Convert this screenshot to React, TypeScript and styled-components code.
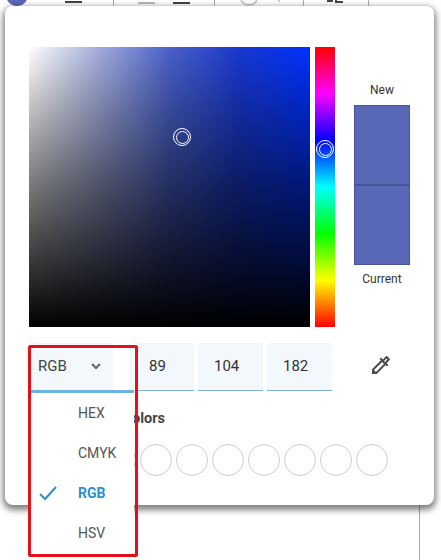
import React from "react";
import styled, { createGlobalStyle } from "styled-components";
import { MdOutlineColorize } from "react-icons/md";

const Global = createGlobalStyle`
  html, body { margin: 0; padding: 0; background: #fff; }
  body { font-family: Roboto, "Liberation Sans", sans-serif; color: #333; }
`;

const Page = styled.div`
  position: relative;
  width: 441px;
  height: 560px;
  overflow: hidden;
  background: #fff;
`;

const Toolbar = styled.div`
  display: flex;
  height: 7px;
  overflow: hidden;
`;

const ToolSection = styled.div<{ $w: number; $pad: number }>`
  box-sizing: border-box;
  width: ${(p) => p.$w}px;
  height: 7px;
  padding-left: ${(p) => p.$pad}px;
  border-right: 1px solid #aaa;
  display: flex;
  gap: 18px;
`;

const Dash = styled.div<{ $c: string; $y: number }>`
  width: 17px;
  height: 2px;
  margin-top: ${(p) => p.$y}px;
  background: ${(p) => p.$c};
`;

const Avatar = styled.div`
  position: absolute;
  left: 6px;
  top: -16px;
  width: 22px;
  height: 22px;
  border-radius: 50%;
  background: #5968b6;
`;

const Sheet = styled.div`
  box-sizing: border-box;
  width: 420px;
  height: 553px;
  border-right: 1px solid #aaa;
`;

const Dialog = styled.div`
  position: absolute;
  left: 5px;
  top: 6px;
  box-sizing: border-box;
  width: 429px;
  height: 499px;
  padding: 41px 24px 0;
  background: #fff;
  border-radius: 8px;
  box-shadow: 0 3px 6px 2px rgba(0, 0, 0, 0.5);
`;

const PickerRow = styled.div`
  display: flex;
  height: 280px;
`;

const SvArea = styled.div`
  position: relative;
  width: 281px;
  height: 280px;
  background:
    linear-gradient(to bottom, rgba(0, 0, 0, 0) 0%, rgba(0, 0, 0, 0.27) 25%, rgba(0, 0, 0, 0.53) 50%, rgba(0, 0, 0, 0.76) 75%, #000 100%),
    linear-gradient(to right, #fff 0%, #e0e4f0 8%, #a2acdc 25%, #4a60c8 50%, #1838d0 75%, #0030ff 100%);
`;

const Knob = styled.div<{ $left: number; $top: number }>`
  position: absolute;
  left: ${(p) => p.$left}px;
  top: ${(p) => p.$top}px;
  box-sizing: border-box;
  width: 18px;
  height: 18px;
  border: 1px solid #fff;
  border-radius: 50%;
  display: flex;
  align-items: center;
  justify-content: center;
  &::after {
    content: "";
    box-sizing: border-box;
    width: 13px;
    height: 13px;
    border: 1px solid #fff;
    border-radius: 50%;
  }
`;

const HueBar = styled.div`
  position: relative;
  width: 20px;
  height: 280px;
  margin-left: 5px;
  background: linear-gradient(to bottom, #f00, #f0f, #00f, #0ff, #0f0, #ff0, #f00);
`;

const PreviewColumn = styled.div`
  display: flex;
  flex-direction: column;
  align-items: center;
  width: 56px;
  margin-left: 19px;
  padding-top: 36px;
`;

const PreviewLabel = styled.div`
  font-size: 12px;
  line-height: 14px;
  color: #333;
`;

const Swatch = styled.div<{ $top?: boolean }>`
  box-sizing: border-box;
  width: 56px;
  height: 80px;
  background: #5968b6;
  border: 1px solid #49559a;
  margin-top: ${(p) => (p.$top ? "8px" : "0")};
  margin-bottom: ${(p) => (p.$top ? "0" : "7px")};
`;

const ValueRow = styled.div`
  display: flex;
  align-items: flex-start;
  margin-top: 16px;
  gap: 4px;
`;

const SelectSpacer = styled.div`
  width: 104px;
  height: 48px;
`;

const Field = styled.div<{ $w: number }>`
  box-sizing: border-box;
  width: ${(p) => p.$w}px;
  height: 48px;
  background: #f3f8fd;
  border-bottom: 1px solid #7fb2d3;
  font-size: 15px;
  line-height: 46px;
  padding-left: ${(p) => (p.$w > 60 ? 16 : 12)}px;
  color: #333;
`;

const EyeButton = styled.div`
  display: flex;
  align-items: center;
  justify-content: center;
  width: 24px;
  height: 44px;
  margin-left: 33px;
  color: #4a4a4a;
  font-size: 24px;
`;

const SavedTitle = styled.div`
  margin-top: 19px;
  font-size: 14.5px;
  line-height: 17px;
  font-weight: 700;
  color: #444;
`;

const Circles = styled.div`
  display: flex;
  gap: 4px;
  margin-top: 17px;
  margin-left: 3px;
`;

const Circle = styled.div`
  box-sizing: border-box;
  width: 32px;
  height: 32px;
  border: 1px solid #ccc;
  border-radius: 50%;
`;

const SelectBox = styled.div`
  position: absolute;
  left: 31px;
  top: 343px;
  width: 103px;
  height: 210px;
  background: #fff;
`;

const SelectHead = styled.div`
  box-sizing: border-box;
  display: flex;
  align-items: center;
  width: 103px;
  height: 50px;
  padding: 0 0 1px 7px;
  background: #f3f8fd;
  border-bottom: 3px solid #6fb3e0;
  font-size: 15px;
  color: #444;
  position: relative;
`;

const Chevron = styled.svg`
  margin-left: 24px;
`;

const HeadGap = styled.div`
  position: absolute;
  left: 82px;
  top: 0;
  width: 16px;
  height: 47px;
  background: #fff;
`;

const MenuItem = styled.div<{ $active?: boolean }>`
  position: relative;
  height: 40px;
  padding-left: 47px;
  font-size: 14px;
  line-height: 40px;
  font-weight: ${(p) => (p.$active ? 700 : 400)};
  color: ${(p) => (p.$active ? "#2a8fd4" : "#555")};
`;

const Check = styled.svg`
  position: absolute;
  left: 8px;
  top: 12px;
`;

const Highlight = styled.div`
  position: absolute;
  left: 28px;
  top: 345px;
  width: 110px;
  height: 212px;
  box-sizing: border-box;
  border: 3px solid #e4101a;
  border-radius: 2px;
  pointer-events: none;
`;

const ToolGlyph = styled.svg`
  display: block;
`;

const menu = ["HEX", "CMYK", "RGB", "HSV"];

export default function App() {
  return (
    <Page>
      <Global />
      <Avatar />
      <Toolbar>
        <ToolSection $w={114} $pad={65}><Dash $c="#444" $y={1} /></ToolSection>
        <ToolSection $w={101} $pad={24}><Dash $c="#bbb" $y={2} /><Dash $c="#444" $y={2} /></ToolSection>
        <ToolSection $w={89} $pad={22}>
          <ToolGlyph width="50" height="7" viewBox="0 0 50 7">
            <path d="M4 0 A9 9 0 0 0 20 0" fill="none" stroke="#ccc" strokeWidth="2" />
            <path d="M42 0 L42 2" fill="none" stroke="#ccc" strokeWidth="2" />
          </ToolGlyph>
        </ToolSection>
        <ToolSection $w={65} $pad={23}>
          <ToolGlyph width="20" height="7" viewBox="0 0 20 7">
            <path d="M0 1 H6 M8 2 H16 M9 0 V2" fill="none" stroke="#444" strokeWidth="2" />
          </ToolGlyph>
        </ToolSection>
      </Toolbar>
      <Sheet />
      <Dialog>
        <PickerRow>
          <SvArea><Knob $left={144} $top={81} /></SvArea>
          <HueBar><Knob $left={1} $top={93} /></HueBar>
          <PreviewColumn>
            <PreviewLabel>New</PreviewLabel>
            <Swatch $top />
            <Swatch />
            <PreviewLabel>Current</PreviewLabel>
          </PreviewColumn>
        </PickerRow>
        <ValueRow>
          <SelectSpacer />
          <Field $w={57}>89</Field>
          <Field $w={65}>104</Field>
          <Field $w={65}>182</Field>
          <EyeButton><MdOutlineColorize /></EyeButton>
        </ValueRow>
        <SavedTitle>Recently used colors</SavedTitle>
        <Circles>
          {Array.from({ length: 10 }, (_, i) => <Circle key={i} />)}
        </Circles>
      </Dialog>
      <SelectBox>
        <SelectHead>
          RGB
          <Chevron width="10" height="7" viewBox="0 0 10 7">
            <path d="M1 1 L5 5 L9 1" fill="none" stroke="#666" strokeWidth="2" />
          </Chevron>
          <HeadGap />
        </SelectHead>
        {menu.map((m) => (
          <MenuItem key={m} $active={m === "RGB"}>
            {m === "RGB" && (
              <Check width="18" height="16" viewBox="0 0 18 16">
                <path d="M1 9 L6 14 L17 2" fill="none" stroke="#2a8fd4" strokeWidth="2" />
              </Check>
            )}
            {m}
          </MenuItem>
        ))}
      </SelectBox>
      <Highlight />
    </Page>
  );
}
